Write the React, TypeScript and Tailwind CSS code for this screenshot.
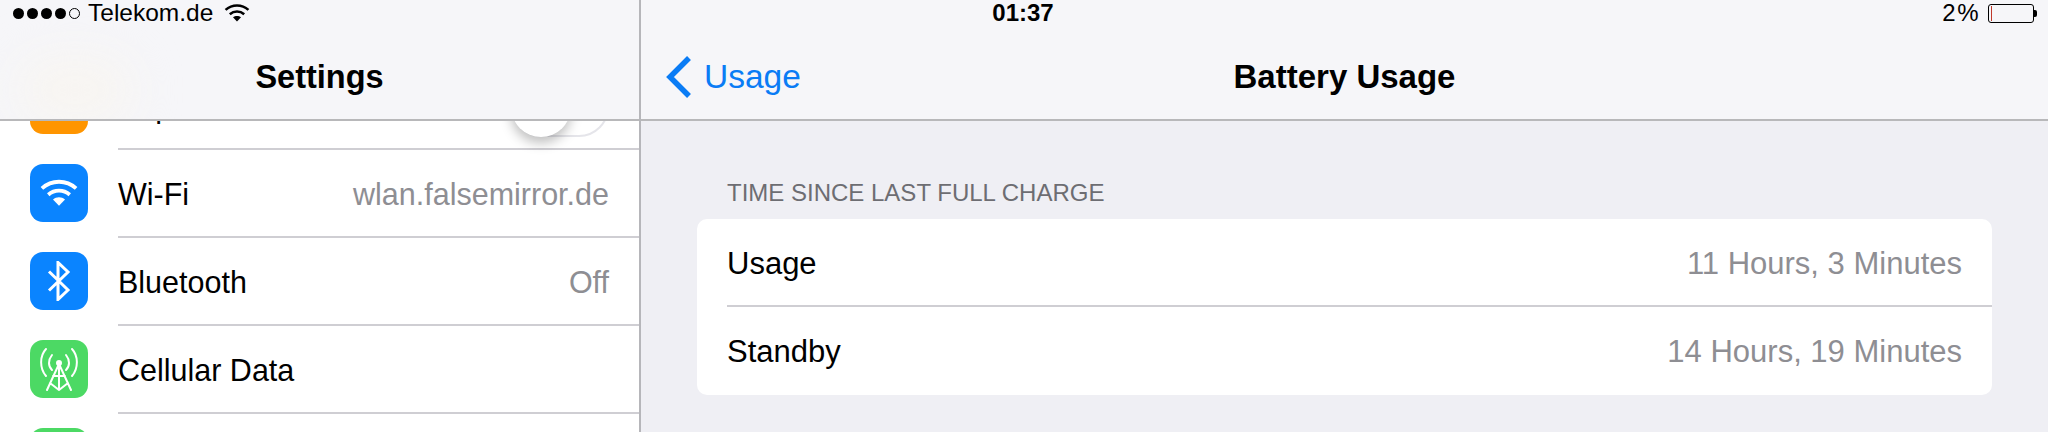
const font = { fontFamily: '"Liberation Sans", Arial, sans-serif' };

function WifiGlyph({ className }: { className: string }) {
  return (
    <svg viewBox="0 0 24 17" className={className} fill="none" stroke="currentColor" strokeLinecap="butt">
      <path d="M1.200 5.600C7.400 0 16.600 0 22.800 5.600" strokeWidth="2.400" />
      <path d="M5.200 9.600C9.200 6.200 14.800 6.200 18.800 9.600" strokeWidth="2.400" />
      <path d="M8.200 12.600L12 16.600L15.800 12.600C13.600 10.800 10.400 10.800 8.200 12.600Z" fill="currentColor" stroke="none" />
    </svg>
  );
}

function Row({ color, icon, label, value, last, children }: { color: string; icon?: React.ReactNode; label: string; value?: string; last?: boolean; children?: React.ReactNode }) {
  return (
    <div className="flex h-[88px] items-center pl-[30px]">
      <div className={`flex h-[58px] w-[58px] shrink-0 items-center justify-center rounded-[13px] ${color}`}>{icon}</div>
      <div className={`ml-[30px] flex h-[89px] flex-1 items-center justify-between self-start pr-[30px] pt-[5px] ${last ? "" : "border-b-2 border-[#cfced3]"}`}>
        <span className="text-[30.5px] text-black">{label}</span>
        {value && <span className="text-[30.500px] text-[#8e8e93]">{value}</span>}
        {children}
      </div>
    </div>
  );
}

export default function App() {
  return (
    <div style={font} className="flex h-[432px] w-[2048px] overflow-hidden bg-[#efeff4]">
      <div className="relative flex w-[641px] shrink-0 flex-col border-r-2 border-[#b6b6ba]">
        <div className="relative z-10 h-[121px] shrink-0 overflow-hidden border-b-2 border-[#b8b8ba] bg-[#f6f6f9]">
          <div className="absolute left-[20px] top-[60px] h-[60px] w-[110px] rounded-full bg-[#f8f5f0] blur-xl" />
          <div className="relative flex h-[26px] items-center pl-[13px] text-[24.5px] text-black">
            <div className="flex gap-[3px]">
              <span className="h-[11px] w-[11px] rounded-full bg-black" />
              <span className="h-[11px] w-[11px] rounded-full bg-black" />
              <span className="h-[11px] w-[11px] rounded-full bg-black" />
              <span className="h-[11px] w-[11px] rounded-full bg-black" />
              <span className="h-[11px] w-[11px] rounded-full border border-black" />
            </div>
            <span className="ml-[8px]">Telekom.de</span>
            <WifiGlyph className="ml-[11px] h-[18px] w-[26px] text-black" />
          </div>
          <div className="relative mt-[31px] text-center text-[32.5px] font-bold leading-[40px] text-black">Settings</div>
        </div>
        <div className="flex-1 overflow-hidden bg-white">
          <div className="-mt-[60px]">
            <Row color="bg-[#ff9500]" label="Airplane Mode">
              <div className="relative h-[60px] w-[98px] rounded-full border-2 border-[#e5e5ea] bg-white">
                <div className="absolute -left-[2px] -top-[2px] h-[60px] w-[60px] rounded-full bg-white shadow-[0_6px_12px_rgba(0,0,0,0.25)]" />
              </div>
            </Row>
            <Row color="bg-[#0a84ff]" label="Wi-Fi" value="wlan.falsemirror.de" icon={<WifiGlyph className="h-[28px] w-[38px] text-white" />} />
            <Row
              color="bg-[#0a84ff]"
              label="Bluetooth"
              value="Off"
              icon={
                <svg viewBox="0 0 24 40" className="h-[40px] w-[24px]" fill="none" stroke="white" strokeWidth="3">
                  <path d="M2 10.500L21 29L11 38.500V1.500L21 11L2 29.500" />
                </svg>
              }
            />
            <Row
              color="bg-[#4cd964]"
              label="Cellular Data"
              icon={
                <svg viewBox="0 0 44 44" className="h-[44px] w-[44px]" fill="none" stroke="white" strokeWidth="2" strokeLinecap="round">
                  <path d="M9 2C2.500 9 2.500 21 9 29M35 2C41.500 9 41.500 21 35 29" />
                  <path d="M15 8C11 13 11 19 15 23M29 8C33 13 33 19 29 23" />
                  <path d="M22 17V43M22 17L10 43M22 17L34 43M13 36L22 43L31 36M16 29L28 29" />
                  <circle cx="22" cy="16" r="2" fill="white" />
                </svg>
              }
            />
            <Row color="bg-[#4cd964]" label="" last />
          </div>
        </div>
      </div>
      <div className="flex flex-1 flex-col">
        <div className="h-[121px] shrink-0 border-b-2 border-[#b8b8ba] bg-[#f6f6f9]">
          <div className="relative flex h-[26px] items-center justify-center pr-[643px] text-[24px] font-bold text-black">
            01:37
            <div className="absolute right-[11px] top-[3px] flex items-center text-[24px] font-normal">
              <span className="mr-[8px] leading-[20px] tracking-[1.5px]">2%</span>
              <div className="flex h-[19px] w-[46px] items-center rounded-[3px] border border-black pl-[2px]">
                <div className="h-[15px] w-[1px] bg-[#c0392b]" />
              </div>
              <div className="h-[7px] w-[3px] rounded-r-[2px] bg-black" />
            </div>
          </div>
          <div className="relative mt-[31px] flex h-[40px] items-center justify-center">
            <div className="absolute left-[25px] flex items-center text-[33.5px] text-[#0a7cf5]">
              <svg viewBox="0 0 26 42" className="h-[42px] w-[26px]" fill="none" stroke="currentColor" strokeWidth="5.500">
                <path d="M23 2L4 21L23 40" />
              </svg>
              <span className="ml-[12px]">Usage</span>
            </div>
            <span className="text-[33px] font-bold text-black">Battery Usage</span>
          </div>
        </div>
        <div className="flex-1 px-[56px] pt-[58px]">
          <div className="ml-[30px] pt-[1px] text-[24px] leading-[25px] text-[#6d6d72]">TIME SINCE LAST FULL CHARGE</div>
          <div className="mt-[14px] rounded-[10px] bg-white">
            <div className="ml-[30px] flex h-[88px] items-center justify-between border-b-2 border-[#cfced3] pr-[30px] pt-[5px]">
              <span className="text-[31px] text-black">Usage</span>
              <span className="text-[31px] text-[#8e8e93]">11 Hours, 3 Minutes</span>
            </div>
            <div className="ml-[30px] flex h-[88px] items-center justify-between pr-[30px] pt-[3px]">
              <span className="text-[31px] text-black">Standby</span>
              <span className="text-[31px] text-[#8e8e93]">14 Hours, 19 Minutes</span>
            </div>
          </div>
        </div>
      </div>
    </div>
  );
}
